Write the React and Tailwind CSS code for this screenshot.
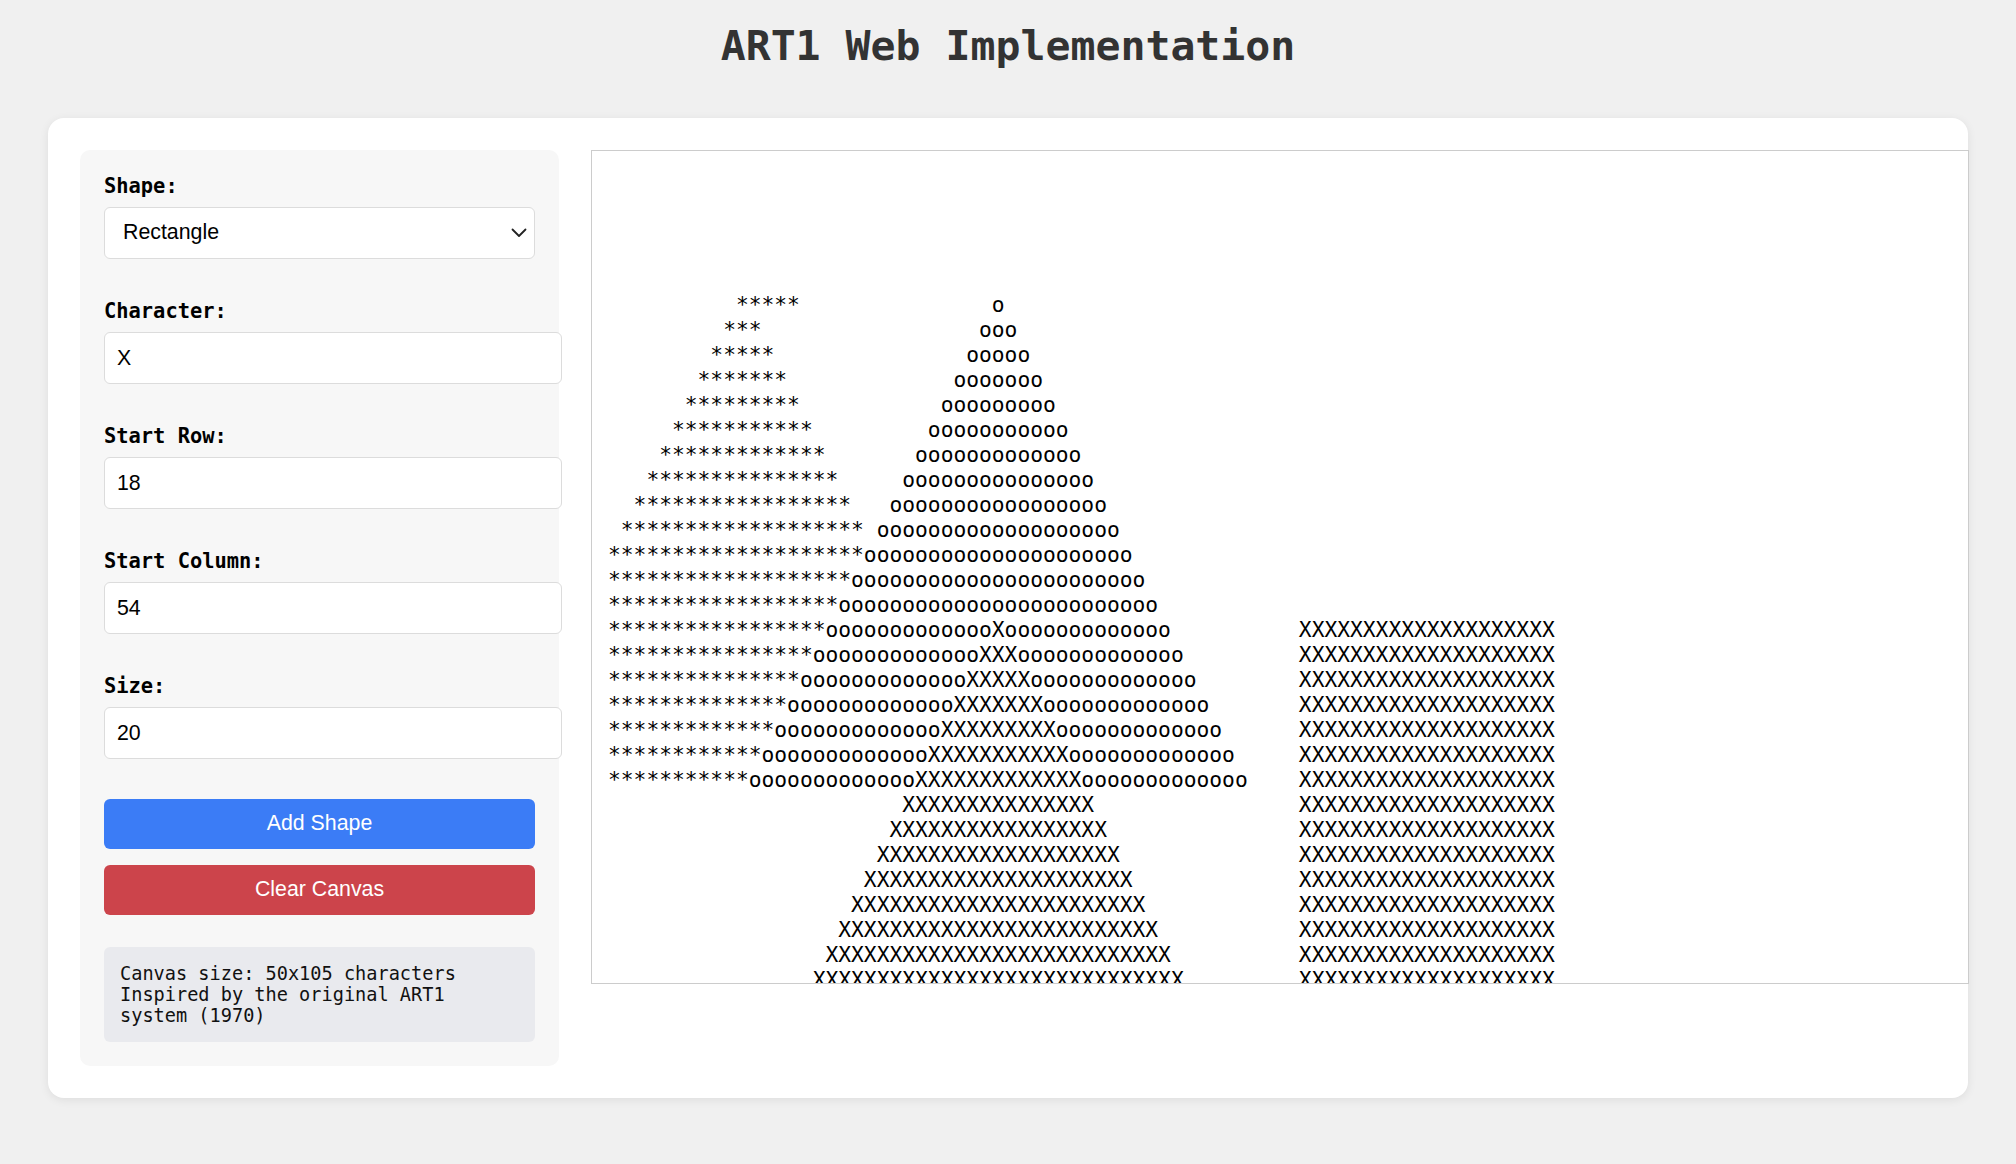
import React, { useState } from 'react';

const ROWS = 50;
const COLS = 105;

const buildCanvas = () => {
    const grid = Array.from({ length: ROWS }, () => Array(COLS).fill(' '));
    const put = (r, c, ch) => {
        if (r >= 0 && r < ROWS && c >= 0 && c < COLS) grid[r][c] = ch;
    };
    const triangle = (row, col, size, ch) => {
        for (let i = 0; i < size; i++) {
            for (let c = col - i; c <= col + i; c++) put(row + i, c, ch);
        }
    };
    const rectangle = (row, col, size, ch) => {
        for (let i = 0; i < size; i++) {
            for (let j = 0; j < size; j++) put(row + i, col + j, ch);
        }
    };

    triangle(5, 10, 20, '*');
    for (let c = 11; c <= 14; c++) put(5, c, '*');
    triangle(5, 30, 20, 'o');
    triangle(18, 30, 20, 'X');
    rectangle(18, 54, 20, 'X');

    return grid.map(row => row.join('')).join('\n');
};

const mono = "font-['DejaVu_Sans_Mono',monospace]";
const sans = "font-['Liberation_Sans',Arial,sans-serif]";

const Field = ({ label, children }) => (
    <div className="mb-[40px]">
        <label className={`block ${mono} font-bold text-[20.4px] leading-[24px] text-black mb-[9px]`}>
            {label}
        </label>
        {children}
    </div>
);

const TextInput = ({ value }) => (
    <input
        type="text"
        defaultValue={value}
        className={`block w-[458px] h-[52px] rounded-[6px] border border-[#dcdcdc] bg-white pl-[12px] ${sans} text-[21.33px] text-black outline-none`}
    />
);

const App = () => {
    const [shape, setShape] = useState('rectangle');
    const canvas = buildCanvas();

    return (
        <div className="min-h-screen bg-[#f0f0f0]">
            <h1 className={`${mono} text-center text-[41.5px] font-bold leading-[48px] text-[#333333] pt-[22px] mb-[48px]`}>
                ART1 Web Implementation
            </h1>

            <div className="mx-auto max-w-[1920px] bg-white rounded-2xl shadow-[0_2px_10px_rgba(0,0,0,0.08)] p-8 flex items-start gap-8">
                <div className="w-[479px] shrink-0 bg-[#f7f7f7] rounded-[10px] p-6">
                    <Field label="Shape:">
                        <div className="relative w-full">
                            <select
                                value={shape}
                                onChange={e => setShape(e.target.value)}
                                className={`block w-full h-[52px] appearance-none rounded-[6px] border border-[#dcdcdc] bg-white pl-[18px] ${sans} text-[21.33px] text-black outline-none`}
                            >
                                <option value="rectangle">Rectangle</option>
                                <option value="triangle">Triangle</option>
                            </select>
                            <svg
                                className="pointer-events-none absolute right-[8px] top-1/2 -translate-y-1/2"
                                width="16"
                                height="10"
                                viewBox="0 0 16 10"
                                fill="none"
                            >
                                <polyline points="1.5,1.5 8,8 14.5,1.5" stroke="#222" strokeWidth="1.8" strokeLinecap="round" strokeLinejoin="round" />
                            </svg>
                        </div>
                    </Field>

                    <Field label="Character:">
                        <TextInput value="X" />
                    </Field>

                    <Field label="Start Row:">
                        <TextInput value="18" />
                    </Field>

                    <Field label="Start Column:">
                        <TextInput value="54" />
                    </Field>

                    <Field label="Size:">
                        <TextInput value="20" />
                    </Field>

                    <button className={`block w-full h-[50px] rounded-[6px] bg-[#3b7cf6] text-white ${sans} text-[21.33px]`}>
                        Add Shape
                    </button>
                    <button className={`block w-full h-[50px] mt-4 rounded-[6px] bg-[#cc444b] text-white ${sans} text-[21.33px]`}>
                        Clear Canvas
                    </button>

                    <div className={`mt-8 rounded-[6px] bg-[#e9eaee] p-4 ${mono} text-[18.6px] leading-[21px] text-[#111]`}>
                        <div>Canvas size: 50x105 characters</div>
                        <div>Inspired by the original ART1</div>
                        <div>system (1970)</div>
                    </div>
                </div>

                <pre className={`m-0 w-[1378px] h-[834px] shrink-0 overflow-hidden border border-[#cccccc] bg-white p-4 ${mono} text-[21.26px] leading-[25px] text-black`}>
                    {canvas}
                </pre>
            </div>
        </div>
    );
};

export default App;
